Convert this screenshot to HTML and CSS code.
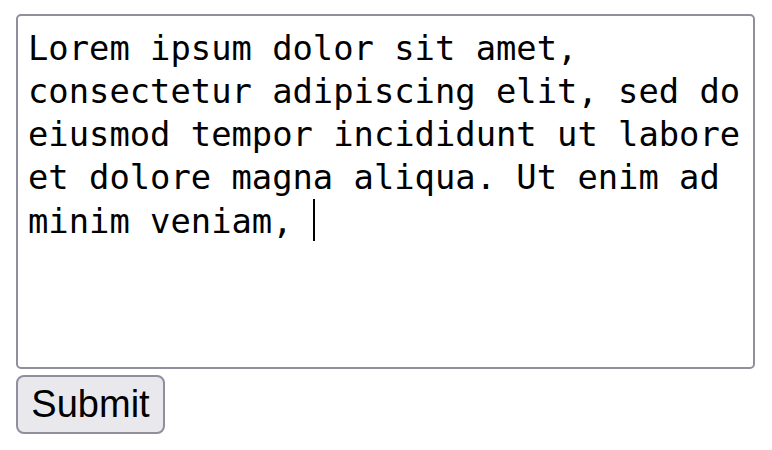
FILE: index.html
```html
<!DOCTYPE html>
<html>
<head>
<meta charset="utf-8">
<link rel="stylesheet" href="styles.css">
</head>
<body>
<div class="wrap">
<div class="editor">Lorem ipsum dolor sit amet, consectetur adipiscing elit, sed do eiusmod tempor incididunt ut labore et dolore magna aliqua. Ut enim ad minim veniam, <span class="caret"></span></div>
<button class="submit" type="button">Submit</button>
</div>
</body>
</html>
```

FILE: styles.css
```css
html, body {
  margin: 0;
  padding: 0;
  background: #ffffff;
}

.wrap {
  display: flex;
  flex-direction: column;
  align-items: flex-start;
  gap: 6px;
  padding: 14px 0 0 16px;
}

.editor {
  box-sizing: border-box;
  width: 739px;
  height: 355px;
  border: 2px solid #8f8f9d;
  border-radius: 5px;
  padding: 11px 4px 0 10px;
  font-family: "DejaVu Sans Mono", "Liberation Mono", monospace;
  font-size: 33.8px;
  line-height: 43px;
  color: #000;
  white-space: pre-wrap;
  overflow: hidden;
}

.caret {
  display: inline-block;
  width: 2px;
  height: 42px;
  background: #000;
  vertical-align: -8px;
}

.submit {
  box-sizing: border-box;
  height: 59px;
  width: 149px;
  margin: 0;
  padding: 0;
  border: 2px solid #8f8f9d;
  border-radius: 8px;
  background: #e9e9ed;
  color: #000;
  font-family: "Liberation Sans", Arial, sans-serif;
  font-size: 38px;
  line-height: 55px;
  text-align: center;
}
```
